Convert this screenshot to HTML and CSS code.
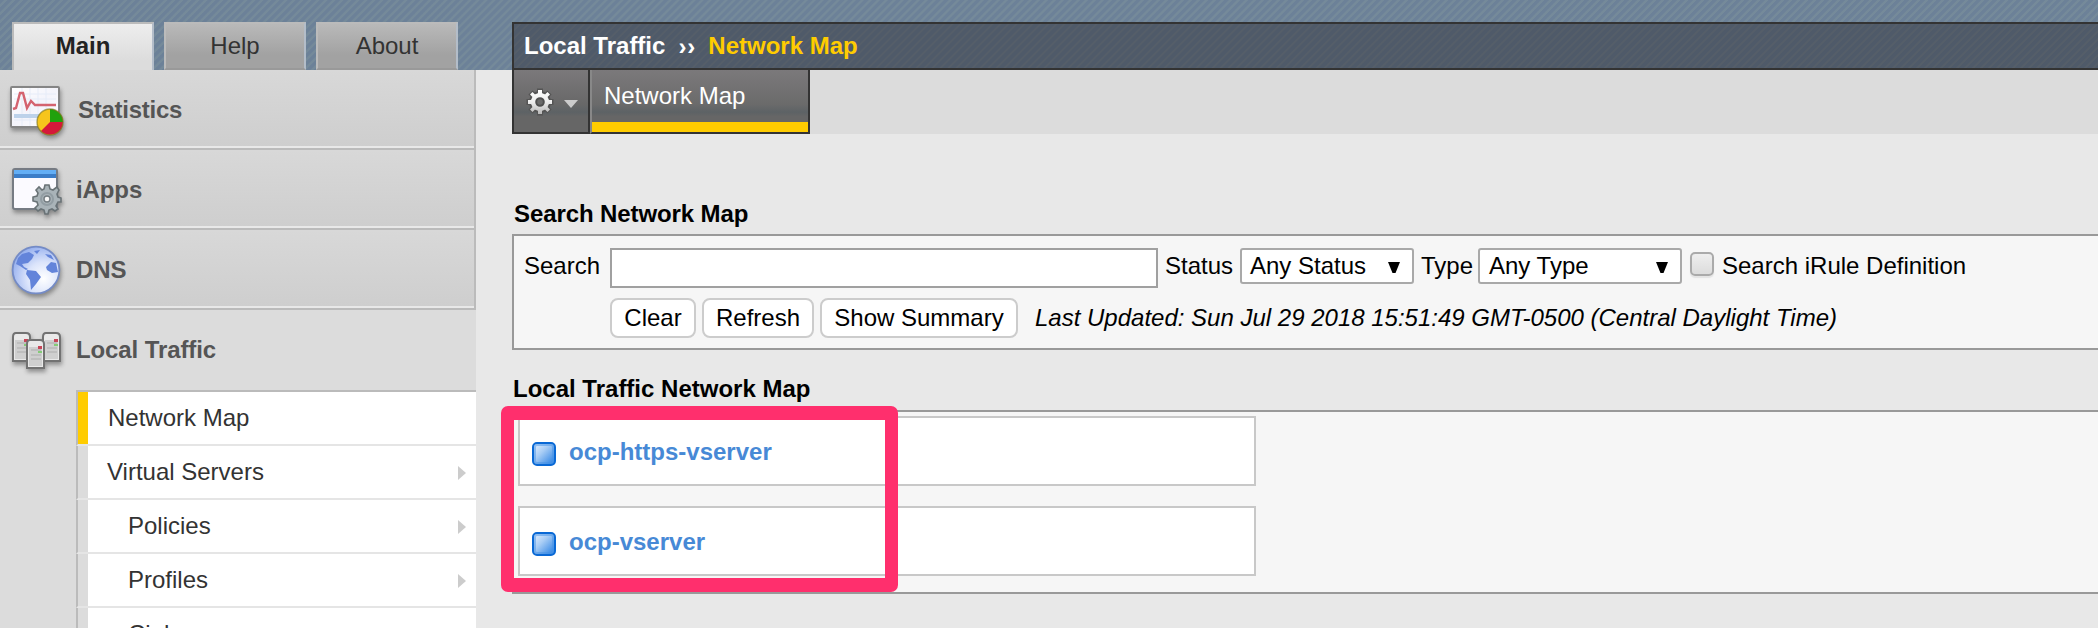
FILE: index.html
```html
<!DOCTYPE html>
<html lang="en">
<head>
<meta charset="utf-8">
<title>Network Map</title>
<link rel="stylesheet" href="styles.css">
</head>
<body>
<div class="layout">
  <aside class="sidebar">
    <div class="side-tabs">
      <div class="side-tab active">Main</div>
      <div class="side-tab">Help</div>
      <div class="side-tab">About</div>
    </div>
    <nav class="modules">
      <div class="module statistics">
        <svg class="module-icon" width="60" height="72" viewBox="0 0 60 72">
          <defs>
            <linearGradient id="paper" x1="0" y1="0" x2="1" y2="1"><stop offset="0" stop-color="#fff"/><stop offset=".5" stop-color="#f4f4fb"/><stop offset="1" stop-color="#fff"/></linearGradient>
          </defs>
          <rect x="11" y="17" width="48" height="40" rx="1" fill="url(#paper)" stroke="#858585" stroke-width="2"/>
          <path d="M14 24H56M14 29H56M14 50H56M22 18V56M30 18V56M38 18V56M46 18V56" stroke="#e6ecf8" stroke-width="1"/>
          <path d="M14 46H56" stroke="#bdd2ea" stroke-width="4"/>
          <path d="M13 39L16 38L20 23H23L27 38L31 31L35 35H56" fill="none" stroke="#d4636f" stroke-width="2.4"/>
          <circle cx="50" cy="52" r="13" fill="#f6c51c"/>
          <path d="M50 52V39A13 13 0 0 1 63 52Z" fill="#20a10c"/>
          <path d="M50 52H63A13 13 0 0 1 41 61Z" fill="#d5183a"/>
          <circle cx="50" cy="52" r="13" fill="none" stroke="#77701e" stroke-opacity=".6" stroke-width="1.4"/>
        </svg>
        <span>Statistics</span>
      </div>
      <div class="module">
        <svg class="module-icon" width="60" height="72" viewBox="0 0 60 72">
          <rect x="13" y="19" width="44" height="40" rx="2" fill="#fbfaff" stroke="#767b83" stroke-width="2"/>
          <path d="M14 20H56V28H14Z" fill="#3b7dc8"/><path d="M14 20H56V24H14Z" fill="#63aef5"/>
          <g transform="translate(47 49)">
            <path d="M-2-14H2L3-10 6-9 10-12 12-9 10-5 11-2 14-1V3L11 3 9 7 11 10 8 12 5 10 2 11 1 15H-2L-3 11-6 10-9 12-12 9-9 6-10 3-14 2V-2L-10-3-9-6-11-9-8-12-5-9-3-10Z" fill="#a9b3b8" stroke="#697276" stroke-width="1.6"/>
            <circle r="6" fill="none" stroke="#929da3" stroke-width="2"/><circle r="3" fill="#f8f8f8" stroke="#747d82" stroke-width="1.4"/>
          </g>
        </svg>
        <span>iApps</span>
      </div>
      <div class="module">
        <svg class="module-icon" width="60" height="72" viewBox="0 0 60 72">
          <defs><radialGradient id="globe" cx=".66" cy=".68" r=".7"><stop offset="0" stop-color="#fff"/><stop offset=".5" stop-color="#dbe4fb"/><stop offset="1" stop-color="#99b2ef"/></radialGradient></defs>
          <circle cx="36" cy="40" r="23.4" fill="url(#globe)" stroke="#748bc6" stroke-width="1.8"/>
          <path d="M18 28L22 24 29 22 34 25 32 29 28 33 22 34 24 37 28 39 26 40 20 36 16 34ZM34 21L40 20 37 24ZM27 40L36 41 41 47 36 54 31 60 30 50 26 44ZM46 37L51 32 56 33 58 42 52 43 47 40ZM45 24L51 25 54 30 48 27Z" fill="#6384da"/>
        </svg>
        <span>DNS</span>
      </div>
      <div class="module open">
        <svg class="module-icon" width="62" height="72" viewBox="0 0 62 72">
          <defs><g id="server">
            <path d="M1 5Q1 1 4 1H14Q18 1 18 5V29H1Z" fill="#e9e9e9" stroke="#727272" stroke-width="2"/>
            <path d="M3 8H16V27H3Z" fill="#cfcfcf"/><path d="M5 11H15M5 16H15M5 20H15" stroke="#b9b9b9" stroke-width="1.4"/>
            <path d="M12 7H16V10H12Z" fill="#c74558"/><path d="M12 12H16V14H12Z" fill="#83cb76"/>
          </g></defs>
          <use href="#server" x="12" y="22"/><use href="#server" x="42" y="22"/><use href="#server" x="26" y="29"/>
        </svg>
        <span>Local Traffic</span>
      </div>
    </nav>
    <div class="submenu">
      <div class="item selected">Network Map</div>
      <div class="item virtual">Virtual Servers<i class="arrow"></i></div>
      <div class="item nested">Policies<i class="arrow"></i></div>
      <div class="item nested">Profiles<i class="arrow"></i></div>
      <div class="item nested">Ciphers</div>
    </div>
  </aside>

  <main class="content">
    <header class="breadcrumb"><span>Local Traffic</span><span class="sep">››</span><span class="current">Network Map</span></header>
    <div class="toolbar">
      <div class="gear">
        <svg width="74" height="62" viewBox="0 0 74 62">
          <defs><linearGradient id="metal" gradientUnits="userSpaceOnUse" x1="0" y1="-12" x2="0" y2="12"><stop offset="0" stop-color="#fff"/><stop offset=".5" stop-color="#eee"/><stop offset="1" stop-color="#b8b8b8"/></linearGradient></defs>
          <g transform="translate(26 32)">
            <circle r="11" fill="#555"/>
            <path d="M0-13.500V13.500M-13.500 0H13.500M-9.500-9.500L9.500 9.500M-9.500 9.500L9.500-9.500" stroke="#555" stroke-width="6"/>
            <path d="M-2-12H2V-8.500L5-7.500 7.500-10 10-7.500 7.500-5 8.500-2H12V2H8.500L7.500 5 10 7.500 7.500 10 5 7.500 2 8.500V12H-2V8.500L-5 7.500-7.500 10-10 7.500-7.500 5-8.500 2H-12V-2H-8.500L-7.500-5-10-7.500-7.500-10-5-7.500-2-8.500Z" fill="url(#metal)"/>
            <circle r="9" fill="url(#metal)"/>
            <circle r="3.800" fill="#6b6b6b" stroke="#505050" stroke-width="2"/>
          </g>
          <path d="M50 30H64L57 38Z" fill="#ccc"/>
        </svg>
      </div>
      <div class="page-tab">Network Map</div>
    </div>

    <h2 class="search-title">Search Network Map</h2>
    <section class="search-panel">
      <div class="search-row">
        <label class="search-label">Search</label>
        <div class="field"></div>
        <label class="status-label">Status</label>
        <div class="select status">Any Status<svg width="12" height="12" viewBox="0 0 12 12"><path d="M0 0H12L7.5 11H4.5Z"/></svg></div>
        <label class="type-label">Type</label>
        <div class="select type">Any Type<svg width="12" height="12" viewBox="0 0 12 12"><path d="M0 0H12L7.5 11H4.5Z"/></svg></div>
        <div class="checkbox"></div>
        <label class="irule">Search iRule Definition</label>
      </div>
      <div class="button-row">
        <div class="button clear">Clear</div>
        <div class="button refresh">Refresh</div>
        <div class="button summary">Show Summary</div>
        <em class="updated">Last Updated: Sun Jul 29 2018 15:51:49 GMT-0500 (Central Daylight Time)</em>
      </div>
    </section>

    <h2 class="map-title">Local Traffic Network Map</h2>
    <section class="map-panel">
      <div class="server-card"><i class="status-icon"></i><span>ocp-https-vserver</span></div>
      <div class="server-card"><i class="status-icon"></i><span>ocp-vserver</span></div>
      <div class="highlight"></div>
    </section>
  </main>
</div>
</body>
</html>
```
FILE: styles.css
```css
* { box-sizing: border-box; }
body {
  margin: 0;
  width: 2098px;
  height: 628px;
  overflow: hidden;
  background: #e8e8e8;
  font: 24px/28px "Liberation Sans", Arial, sans-serif;
  color: #000;
  white-space: nowrap;
}
.layout {
  display: flex;
  height: 628px;
  overflow: hidden;
  background: repeating-linear-gradient(135deg, #6c8198 0 2.5px, #758a9a 3.5px 5px, #6c8198 5.66px) 0 0 / 2098px 70px no-repeat;
}
.sidebar { width: 476px; height: 628px; flex: none; }
.side-tabs { display: flex; gap: 10px; height: 70px; padding: 22px 0 0 12px; }
.side-tab {
  width: 142px;
  height: 48px;
  padding-top: 8px;
  border: 2px solid #bbb;
  border-right-color: #b3bdc9;
  border-bottom-color: #999;
  background: linear-gradient(#b9b9b9, #a2a2a2 70%);
  color: #333;
  text-align: center;
}
.side-tab.active {
  border-bottom: 0;
  background: linear-gradient(#eee, #dcdcdc 80%);
  color: #222;
  font-weight: bold;
}
.module {
  display: flex;
  align-items: flex-start;
  height: 80px;
  border-right: 2px solid #bbb;
  border-bottom: 2px solid #bbb;
  box-shadow: inset 0 -2px #e8e8e8;
  background: linear-gradient(#d8d8d8, #cecece);
  color: #555;
  font-weight: bold;
}
.module span { margin: 26px 0 0 16px; letter-spacing: -0.1px; }
.module.statistics span { margin-left: 18px; letter-spacing: -0.25px; }
.module.open { border: 0; box-shadow: none; background: #dcdcdc; }
.module.open span { margin-left: 14px; }
.module-icon { flex: none; overflow: visible; filter: drop-shadow(1px 3px 2px rgba(0,0,0,.35)); }
.submenu {
  height: 238px;
  padding-left: 76px;
  background: #dcdcdc;
}
.item {
  display: flex;
  justify-content: space-between;
  height: 54px;
  padding: 12px 10px 0 19px;
  border-left: 2px solid #bbb;
  border-bottom: 2px solid #e5e5e5;
  background: linear-gradient(90deg, #dcdcdc 10px, #fff 10px);
  color: #333;
}
.item.selected {
  height: 56px;
  border-top: 2px solid #bbb;
  padding-left: 30px;
  background: linear-gradient(90deg, #fc0 10px, #fff 10px);
}
.virtual { padding-left: 29px; }
.nested { padding-left: 50px; }
.arrow {
  margin-top: 8px;
  width: 8px;
  height: 14px;
  background: #ccc;
  clip-path: polygon(0 0, 100% 50%, 0 100%);
}
.content { width: 1586px; margin-left: 36px; padding-top: 22px; }
.breadcrumb {
  display: flex;
  height: 48px;
  padding: 8px 0 0 10px;
  border: 2px solid #333;
  border-right: 0;
  background: repeating-linear-gradient(135deg, #4f5a69 0 3px, #555e69 4px 5px, #4f5a69 5.66px);
  color: #fff;
  font-weight: bold;
}
.sep { margin-left: 13px; padding-top: 1px; letter-spacing: 1px; }
.current { margin-left: 12px; color: #fc0; }
.toolbar { display: flex; height: 64px; background: #dcdcdc; }
.gear {
  width: 78px;
  border: 2px solid #333;
  border-top: 0;
  background: linear-gradient(#7b797b, #686868 55%, #5d6265 68%, #666 75%);
}
.gear svg { display: block; }
.page-tab {
  width: 220px;
  padding: 12px 0 0 12px;
  border-right: 2px solid #333;
  border-bottom: 2px solid #333;
  border-left: 2px solid #888;
  background: linear-gradient(#fc0, #fc0) 0 100% / 100% 10px no-repeat, linear-gradient(#7b797b, #6b6b6b 55%, #5d6265 68%, #666 75%);
  color: #fff;
}
h2 { margin: 0; font-size: 24px; line-height: 28px; }
.search-title { padding: 66px 0 6px 2px; letter-spacing: -0.1px; }
.search-panel {
  height: 116px;
  padding: 12px 0 0 10px;
  border: 2px solid #999;
  border-right: 0;
  background: #f6f6f6;
}
.search-row, .button-row { display: flex; }
.search-row { height: 50px; }
.search-row label { padding-top: 4px; flex: none; }
.search-label { width: 86px; }
.field { width: 548px; height: 40px; border: 2px solid #a0a0a0; background: #fff; }
.search-row .status-label { width: 82px; padding-left: 7px; }
.select {
  display: flex;
  justify-content: space-between;
  align-items: flex-start;
  height: 36px;
  padding: 2px 12px 0 8px;
  border: 2px solid #a9a9a9;
  border-radius: 3px;
  background: #fff;
}
.select svg { margin-top: 10px; }
.status { width: 174px; }
.search-row .type-label { width: 64px; padding-left: 7px; }
.type { width: 204px; padding-left: 9px; }
.checkbox {
  width: 24px;
  height: 24px;
  margin: 4px 8px 0 8px;
  border: 2px solid #aaa;
  border-radius: 5px;
  background: linear-gradient(#eee, #dcdcdc);
  box-shadow: 0 2px 1px #e4e4e4;
}
.button-row { padding-left: 86px; }
.button {
  height: 40px;
  margin-right: 6px;
  padding-top: 4px;
  border: 2px solid #ccc;
  border-radius: 8px;
  background: #fff;
  text-align: center;
}
.clear { width: 86px; }
.refresh { width: 112px; }
.summary { width: 198px; }
.updated { margin: 6px 0 0 11px; }
.map-title { padding: 25px 0 7px 1px; }
.map-panel {
  position: relative;
  display: flex;
  flex-direction: column;
  gap: 20px;
  height: 184px;
  padding: 4px 0 0 4px;
  border: 2px solid #999;
  border-right: 0;
  background: #f6f6f6;
}
.server-card {
  display: flex;
  width: 738px;
  height: 70px;
  padding: 20px 0 0 12px;
  border: 2px solid #c8c8c8;
  background: #fff;
  color: #4789d6;
  font-weight: bold;
}
.status-icon {
  width: 24px;
  height: 24px;
  margin: 4px 13px 0 0;
  border: 2px solid #0a69d5;
  border-radius: 5px;
  background: linear-gradient(135deg, #e4f0ff, #a9cdf5 40%, #3c8ce6 90%);
  box-shadow: inset 0 0 0 2px rgba(70, 145, 230, .5);
}
.highlight {
  position: absolute;
  left: -13px;
  top: -6px;
  width: 397px;
  height: 186px;
  border: 14px solid #ff2f6d;
  border-right-width: 13px;
  border-left-width: 13px;
  border-radius: 7px;
}
```
